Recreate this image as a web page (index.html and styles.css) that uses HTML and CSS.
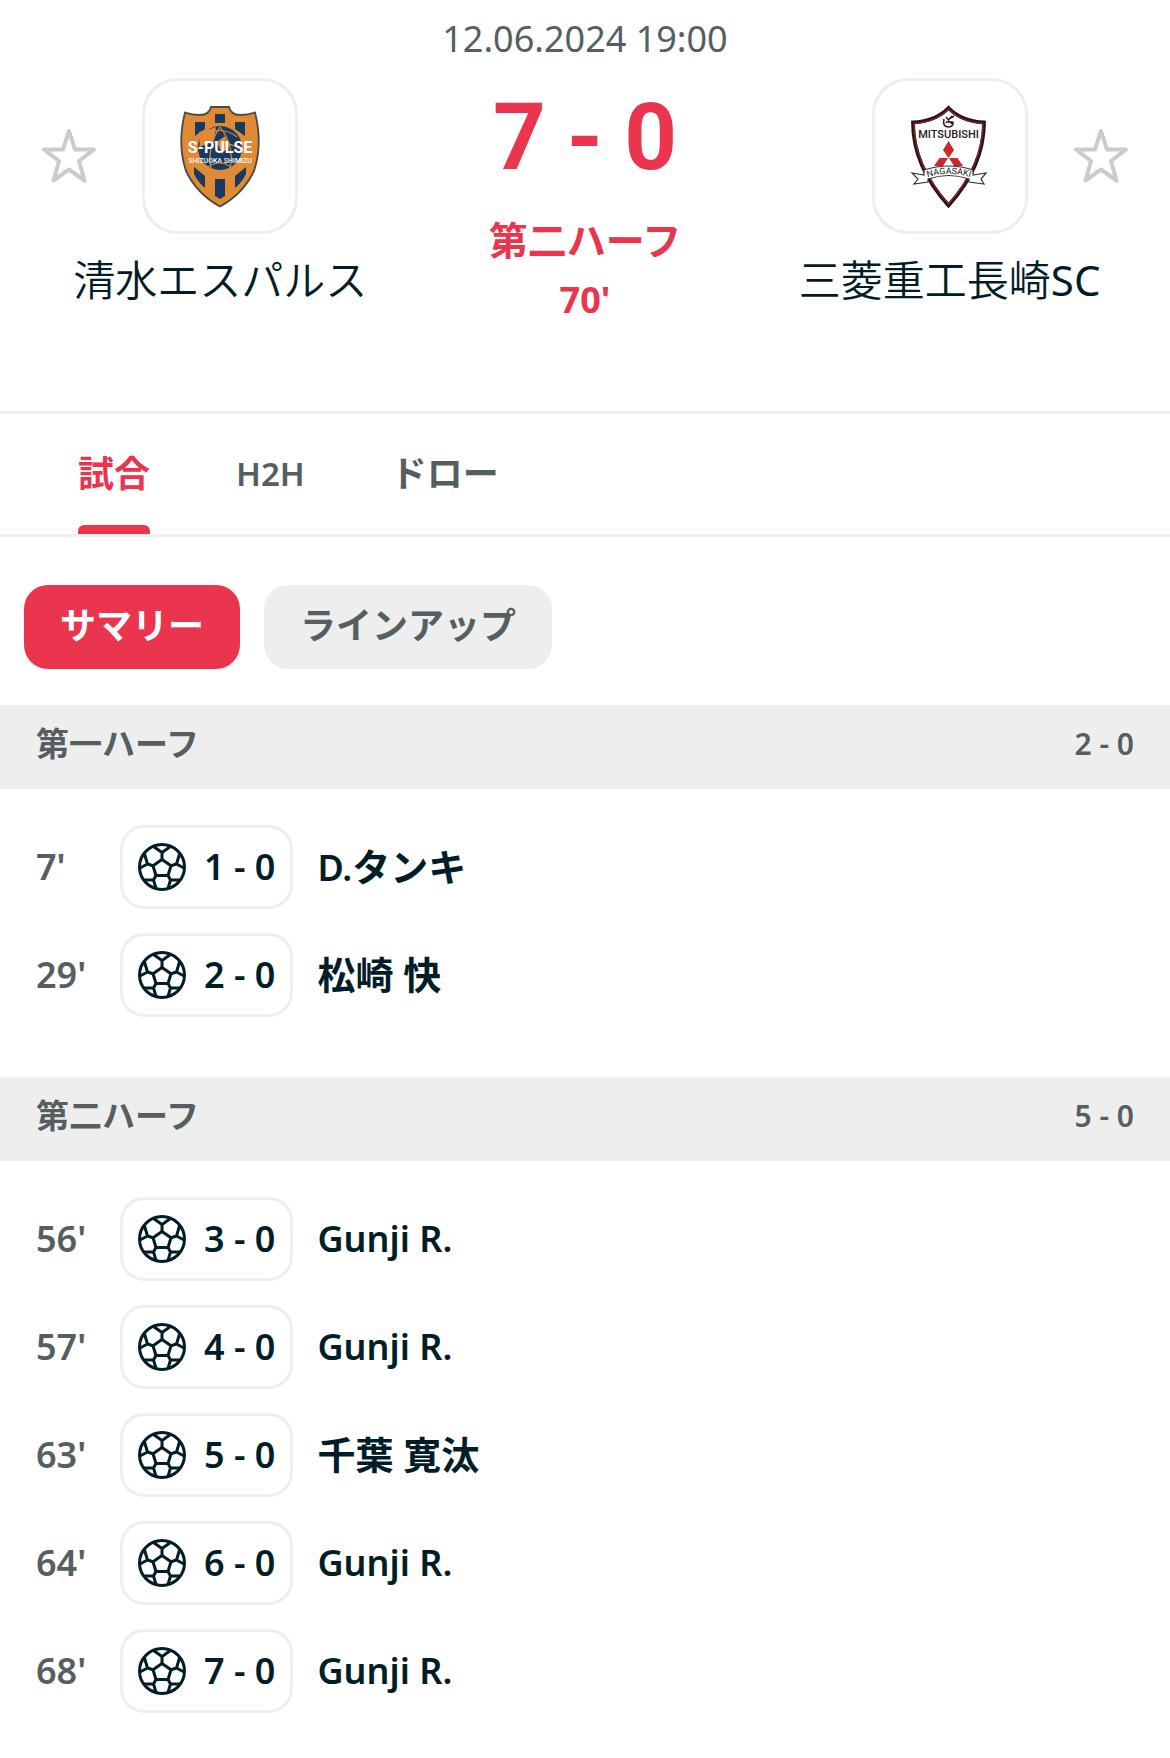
FILE: index.html
```html
<!DOCTYPE html>
<html lang="ja">
<head>
<meta charset="utf-8">
<meta name="viewport" content="width=device-width, initial-scale=1">
<title>清水エスパルス - 三菱重工長崎SC</title>
<link rel="stylesheet" href="styles.css">
</head>
<body>
<svg class="sprite" aria-hidden="true">
  <symbol id="ball" viewBox="0 0 48 48">
    <g fill="none" stroke="currentColor" stroke-width="3" stroke-linejoin="round">
      <circle cx="24" cy="24" r="22.5"/>
      <path d="M24 16.500L33 22.800L30 32.500H18L15 22.800Z"/>
      <path d="M24 16.500V9.500M24 9.500L15.500 3.500M24 9.500L32.500 3.500M15 22.800L9.500 21M9.500 21L2 25M9.500 21L6.500 11M33 22.800L38.500 21M38.500 21L46 25M38.500 21L41.500 11M18 32.500L15.500 37M15.500 37H6M15.500 37L18 45.500M30 32.500L32.500 37M32.500 37H42M32.500 37L30 45.500"/>
    </g>
  </symbol>
  <symbol id="star" viewBox="0 0 54 54">
    <path d="M27 2L33 20.500H52L37 32L42.500 51.500L27 40.500L11.500 51.500L17 32L2 20.500H21Z" fill="none" stroke="currentColor" stroke-width="4" stroke-linejoin="round"/>
  </symbol>
</svg>

<header class="match">
  <section class="team">
    <button class="star" type="button" aria-label="清水エスパルスをお気に入りに追加"><svg><use href="#star"/></svg></button>
    <a class="crest" href="#home" aria-label="清水エスパルス">
      <svg viewBox="0 0 100 120">
        <path d="M41 11H59Q61 19 70 19Q78 19 85 16.500Q93 48 84 75Q73 98 50 110.500Q27 98 16 75Q7 48 15 16.500Q22 19 30 19Q39 19 41 11Z" fill="#e08a35" stroke="#4b4a45" stroke-width="1.800"/>
        <g fill="#173a62">
          <path d="M45 18H55V27H45ZM25 26H35V33L25 40ZM65 26H75V40L65 33ZM45 83H55V100L50 103L45 100ZM24 71L35 80V92Q28 86 24 78ZM76 71L65 80V92Q72 86 76 78Z"/>
          <circle cx="50" cy="52" r="22"/>
        </g>
        <g fill="none" stroke="#e08a35" stroke-width="1.200">
          <path d="M33 41Q50 28 67 41M29 50Q50 40 72 54M36 72Q50 62 62 72M50 31Q37 50 41 73M50 31Q65 50 60 73"/>
        </g>
        <path d="M29 36Q38 34 46 31L44 44L30 51ZM47 46L55 40L59 50L52 58Z" fill="#e08a35"/>
        <text class="crest-name" x="50" y="57">S-PULSE</text>
        <text class="crest-place" x="50" y="67">SHIZUOKA SHIMIZU</text>
      </svg>
    </a>
    <h2 class="team-name">清水エスパルス</h2>
  </section>

  <div class="status">
    <time class="date" datetime="2024-06-12T19:00">12.06.2024 19:00</time>
    <div class="score"><span>7</span><span>-</span><span>0</span></div>
    <div class="period">第二ハーフ</div>
    <div class="clock">70'</div>
  </div>

  <section class="team away">
    <button class="star" type="button" aria-label="三菱重工長崎SCをお気に入りに追加"><svg><use href="#star"/></svg></button>
    <a class="crest" href="#away" aria-label="三菱重工長崎SC">
      <svg viewBox="0 0 100 120">
        <path d="M48.500 12Q61 25 84 26.500Q84 70 48.500 109.500Q13 70 13 26.500Q36 25 48.500 12Z" fill="#fff" stroke="#211516" stroke-width="3.800"/>
        <path d="M48.500 13Q61 26 83 27.500Q83 69 48.500 108Q14 69 14 27.500Q36 26 48.500 13Z" fill="none" stroke="#7d2027" stroke-width="1.500"/>
        <path d="M44 23Q42 31 49 31Q54 30 53 26M46 21L52 28M52 20L46 27M49 23L54 20M48 26H53" fill="none" stroke="#2b2020" stroke-width="1.500"/>
        <path d="M48.500 45L54 54L48.500 62L43 54ZM39.500 62H48L43 70H34ZM49 62H57.500L63 70H54Z" fill="#c82a2a"/>
        <path d="M12 77L24 79V74Q49 66 73 74V79L86 77L81 83L84 88L69 86V83Q49 76 28 83V86L14 88L18 83Z" fill="#fff" stroke="#333" stroke-width="1.200"/>
        <path id="ribbon" d="M25 82Q49 74 73 82" fill="none"/>
        <text class="maker" x="48.500" y="42">MITSUBISHI</text>
        <text class="city"><textPath href="#ribbon" startOffset="50%">NAGASAKI</textPath></text>
      </svg>
    </a>
    <h2 class="team-name">三菱重工長崎<span class="suffix">SC</span></h2>
  </section>
</header>

<nav class="tabs">
  <a class="tab active" href="#match" aria-current="page">試合</a>
  <a class="tab latin" href="#h2h">H2H</a>
  <a class="tab" href="#draw">ドロー</a>
</nav>

<main>
  <div class="filters">
    <button class="chip selected" type="button">サマリー</button>
    <button class="chip" type="button">ラインアップ</button>
  </div>

  <section class="half">
    <h3 class="half-title"><span>第一ハーフ</span><span class="half-score">2 - 0</span></h3>
    <ul class="events">
      <li class="event"><span class="minute">7'</span><span class="goal"><svg><use href="#ball"/></svg>1 - 0</span><a class="player" href="#p1">D.<span class="jp">タンキ</span></a></li>
      <li class="event"><span class="minute">29'</span><span class="goal"><svg><use href="#ball"/></svg>2 - 0</span><a class="player" href="#p2"><span class="jp">松崎 快</span></a></li>
    </ul>
  </section>

  <section class="half">
    <h3 class="half-title"><span>第二ハーフ</span><span class="half-score">5 - 0</span></h3>
    <ul class="events">
      <li class="event"><span class="minute">56'</span><span class="goal"><svg><use href="#ball"/></svg>3 - 0</span><a class="player" href="#p3">Gunji R.</a></li>
      <li class="event"><span class="minute">57'</span><span class="goal"><svg><use href="#ball"/></svg>4 - 0</span><a class="player" href="#p3">Gunji R.</a></li>
      <li class="event"><span class="minute">63'</span><span class="goal"><svg><use href="#ball"/></svg>5 - 0</span><a class="player" href="#p4"><span class="jp">千葉 寛汰</span></a></li>
      <li class="event"><span class="minute">64'</span><span class="goal"><svg><use href="#ball"/></svg>6 - 0</span><a class="player" href="#p3">Gunji R.</a></li>
      <li class="event"><span class="minute">68'</span><span class="goal"><svg><use href="#ball"/></svg>7 - 0</span><a class="player" href="#p3">Gunji R.</a></li>
    </ul>
  </section>
</main>
</body>
</html>
```
FILE: styles.css
```css
:root {
  --ink: #001e28;
  --muted: #555e61;
  --line: #eeeeee;
  --accent: #eb344d;
}

* { box-sizing: border-box; }

body {
  margin: 0;
  background: #fff;
  color: var(--ink);
  font-family: "Noto Sans", "Noto Sans CJK JP", sans-serif;
  font-size: 36px;
  line-height: 48px;
}

h2, h3, ul { margin: 0; padding: 0; }
ul { list-style: none; }
a { color: inherit; text-decoration: none; }
button { border: 0; font: inherit; cursor: pointer; }
svg { display: block; }
.sprite { position: absolute; width: 0; height: 0; }

/* Match header */
.match {
  display: grid;
  grid-template-columns: 7fr 6fr 7fr;
  padding: 15px 24px 87px;
  border-bottom: 3px solid var(--line);
}

.team {
  display: grid;
  grid-template-columns: 1fr 156px 1fr;
  align-content: start;
  align-items: center;
  justify-items: start;
  padding-top: 63px;
}

.star {
  padding: 0 18px;
  background: none;
  color: #c8cccc;
}
.star svg { width: 54px; height: 54px; }
.away .star { grid-column: 3; grid-row: 1; justify-self: end; }
.away .crest { grid-column: 2; grid-row: 1; }

.crest {
  display: grid;
  place-items: center;
  width: 156px;
  height: 156px;
  border: 3px solid var(--line);
  border-radius: 36px;
}
.crest svg { width: 100px; height: 120px; }
.crest text { text-anchor: middle; }
.crest-name { font: bold 16px "Roboto", sans-serif; fill: #fff; }
.crest-place { font: 500 7px "Roboto", sans-serif; fill: #fff; }
.maker { font: 500 11px "Roboto", sans-serif; fill: #222; }
.city { font: 9px "Roboto", sans-serif; fill: #222; }

.team-name {
  grid-column: 1 / -1;
  justify-self: center;
  padding-top: 16px;
  font-size: 42px;
  font-weight: 350;
  line-height: 60px;
  white-space: nowrap;
}
.suffix { font-weight: 400; }

.status {
  display: flex;
  flex-direction: column;
  align-items: center;
  color: var(--accent);
  white-space: nowrap;
}
.date { color: var(--muted); }
.score {
  display: flex;
  gap: 21px;
  padding-top: 18px;
  font: bold 92px/114px "Roboto", sans-serif;
}
.period { padding-top: 15px; font-size: 39px; font-weight: 700; line-height: 60px; }
.clock { padding-top: 6px; font-weight: 700; }

/* Navigation */
.tabs {
  display: flex;
  gap: 84px;
  height: 123px;
  padding: 0 78px;
  border-bottom: 3px solid var(--line);
  color: var(--muted);
  font-weight: 700;
}
.tab {
  display: flex;
  flex-direction: column;
  justify-content: space-between;
  padding-top: 36px;
}
.tab.latin { padding-left: 2px; padding-right: 2px; font-size: 33px; font-weight: 600; }
.tab.active { color: var(--accent); }
.tab.active::after {
  content: "";
  height: 9px;
  border-radius: 6px 6px 0 0;
  background: var(--accent);
}

.filters { display: flex; gap: 24px; padding: 48px 24px 36px; }
.chip {
  height: 84px;
  padding: 0 36px 2px;
  border-radius: 24px;
  background: var(--line);
  color: var(--muted);
  font-weight: 700;
}
.chip.selected { background: var(--accent); color: #fff; }

/* Goals by half */
.half-title {
  display: flex;
  align-items: center;
  justify-content: space-between;
  height: 84px;
  padding: 0 36px 6px;
  background: var(--line);
  color: var(--muted);
  font-size: 33px;
  font-weight: 700;
}
.half-score { font-size: 30px; font-weight: 600; }
.events {
  display: flex;
  flex-direction: column;
  gap: 24px;
  padding: 36px 36px 60px;
}
.half:last-child .events { padding-bottom: 45px; }
.event { display: flex; align-items: center; font-weight: 600; }
.minute { width: 84px; color: var(--muted); }
.goal {
  display: flex;
  align-items: center;
  gap: 18px;
  height: 84px;
  margin-right: 24px;
  padding: 0 15px;
  border: 3px solid var(--line);
  border-radius: 24px;
}
.goal svg { width: 48px; height: 48px; }
.jp { font-size: 38px; font-weight: 700; }
```
